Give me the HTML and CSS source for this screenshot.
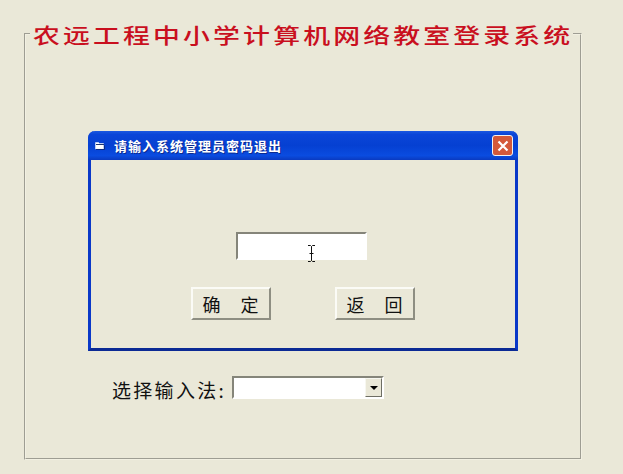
FILE: index.html
```html
<!DOCTYPE html>
<html lang="zh-CN">
<head>
    <meta charset="UTF-8">
    <meta name="viewport" content="width=device-width, initial-scale=1.0">
    <title>农远工程中小学计算机网络教室登录系统</title>
    <link rel="stylesheet" href="styles.css">
</head>
<body>
    <fieldset class="frame">
        <legend class="frame-title"><span class="frame-title-text">农远工程中小学计算机网络教室登录系统</span></legend>

        <div class="dialog">
            <div class="titlebar">
                <svg class="titlebar-icon" width="10" height="9" viewBox="0 0 10 9">
                    <path d="M0.5 1.5h3l1 1h4v5.5h-8z" fill="#fff" stroke="#dfe6f5" stroke-width="0.6"/>
                    <path d="M1 3.5h8" stroke="#20366e" stroke-width="1"/>
                    <path d="M1 8.5h8.5v-4" fill="none" stroke="#0b2a80" stroke-width="1"/>
                </svg>
                <span class="titlebar-text">请输入系统管理员密码退出</span>
                <div class="close-btn">
                    <svg width="12" height="12" viewBox="0 0 12 12">
                        <path d="M1.5 1.5l9 9M10.5 1.5l-9 9" stroke="#fff" stroke-width="2.2" fill="none"/>
                    </svg>
                </div>
            </div>
            <div class="dialog-body">
                <div class="password-box">
                    <input type="text" class="password-input">
                    <svg class="ibeam" width="9" height="17" viewBox="0 0 9 17">
                        <path d="M1 0.5h2.5l1 1 1-1h2.5M4.5 1.5v14M1 16.5h2.5l1-1 1 1h2.5M2.5 8.5h4" fill="none" stroke="#111" stroke-width="1"/>
                    </svg>
                </div>
                <div class="dialog-buttons">
                    <button class="xp-btn">确 定</button>
                    <button class="xp-btn">返 回</button>
                </div>
            </div>
        </div>

        <div class="ime-row">
            <label class="ime-label">选择输入法:</label>
            <div class="combo">
                <div class="combo-arrow"></div>
            </div>
        </div>
    </fieldset>
</body>
</html>
```

FILE: styles.css
```css
html, body {
    height: 100%;
}
body {
    margin: 0;
    background-color: #eae8d8;
    font-family: "Noto Sans CJK SC", "Liberation Sans", sans-serif;
    overflow: hidden;
}
.frame {
    box-sizing: border-box;
    width: 558px;
    height: 438px;
    margin: 22px 0 0 24px;
    padding: 0;
    border: 2px groove #f2f0e2;
    min-inline-size: 0;
}
.frame-title {
    margin-left: 4px;
    padding: 0 3px;
    width: 537px;
    box-sizing: content-box;
    height: 24px;
    line-height: 24px;
}
.frame-title-text {
    display: inline-block;
    font-family: "Noto Sans CJK SC", serif;
    font-size: 21px;
    font-weight: 500;
    letter-spacing: 2.45px;
    color: #c90f1e;
    white-space: nowrap;
    transform: scaleX(1.28);
    transform-origin: left center;
}
.dialog {
    box-sizing: border-box;
    width: 430px;
    height: 220px;
    margin: 85px 0 0 62px;
    display: flex;
    flex-direction: column;
    border: 3px solid #0a38c8;
    border-top: none;
    border-bottom-color: #0b2a94;
    border-radius: 7px 7px 0 0;
    background: #eae8d8;
}
.titlebar {
    height: 29px;
    margin: 0 -3px;
    padding: 0 5px 0 7px;
    display: flex;
    align-items: center;
    background: linear-gradient(#1a58e0 0, #0a45d8 12%, #0540d2 50%, #0a4ce0 85%, #0a3ac0 100%);
    border-radius: 7px 7px 0 0;
}
.titlebar-icon {
    margin-right: 9px;
}
.titlebar-text {
    flex: 1;
    font-size: 13px;
    font-weight: 700;
    letter-spacing: 1px;
    line-height: 1;
    color: #fff;
    text-shadow: 1px 1px 0 #0a2a90;
    white-space: nowrap;
}
.close-btn {
    box-sizing: border-box;
    width: 21px;
    height: 21px;
    display: flex;
    align-items: center;
    justify-content: center;
    border: 1px solid #f2f2f2;
    border-radius: 3px;
    background: #d4593a;
}
.dialog-body {
    flex: 1;
    display: flex;
    flex-direction: column;
    align-items: center;
    padding-top: 72px;
}
.password-box {
    position: relative;
    width: 131px;
    height: 28px;
    margin-left: -3px;
}
.password-input {
    box-sizing: border-box;
    display: block;
    width: 100%;
    height: 100%;
    padding: 0;
    border: 2px solid;
    border-color: #85857a #fff #fff #85857a;
    background: #fff;
    outline: none;
}
.ibeam {
    position: absolute;
    left: 71px;
    top: 13px;
}
.dialog-buttons {
    display: flex;
    gap: 64px;
    margin-top: 27px;
    margin-left: -1px;
}
.xp-btn {
    box-sizing: border-box;
    width: 80px;
    height: 33px;
    padding: 0;
    border: 2px solid;
    border-color: #fbfbf6 #8e8e82 #8e8e82 #fbfbf6;
    background: #eae8d8;
    font-family: "Noto Sans CJK SC", sans-serif;
    font-size: 18px;
    font-weight: 400;
    word-spacing: 16px;
    color: #111;
    line-height: 1;
}
.ime-row {
    display: flex;
    align-items: flex-start;
    margin: 25px 0 0 86px;
}
.ime-label {
    width: 120px;
    font-size: 19px;
    line-height: 28px;
    letter-spacing: 2.3px;
    color: #111;
    white-space: nowrap;
}
.combo {
    box-sizing: border-box;
    width: 152px;
    height: 23px;
    display: flex;
    justify-content: flex-end;
    border: 2px solid;
    border-color: #85857a #fff #fff #85857a;
    background: #fff;
}
.combo-arrow {
    box-sizing: border-box;
    width: 17px;
    height: 19px;
    display: flex;
    align-items: center;
    justify-content: center;
    border: 1px solid;
    border-color: #f7f7f0 #6e6e64 #6e6e64 #f7f7f0;
    background: #eae8d8;
}
.combo-arrow::after {
    content: "";
    border-style: solid;
    border-width: 4px 4px 0;
    border-color: #000 transparent transparent;
}
```
